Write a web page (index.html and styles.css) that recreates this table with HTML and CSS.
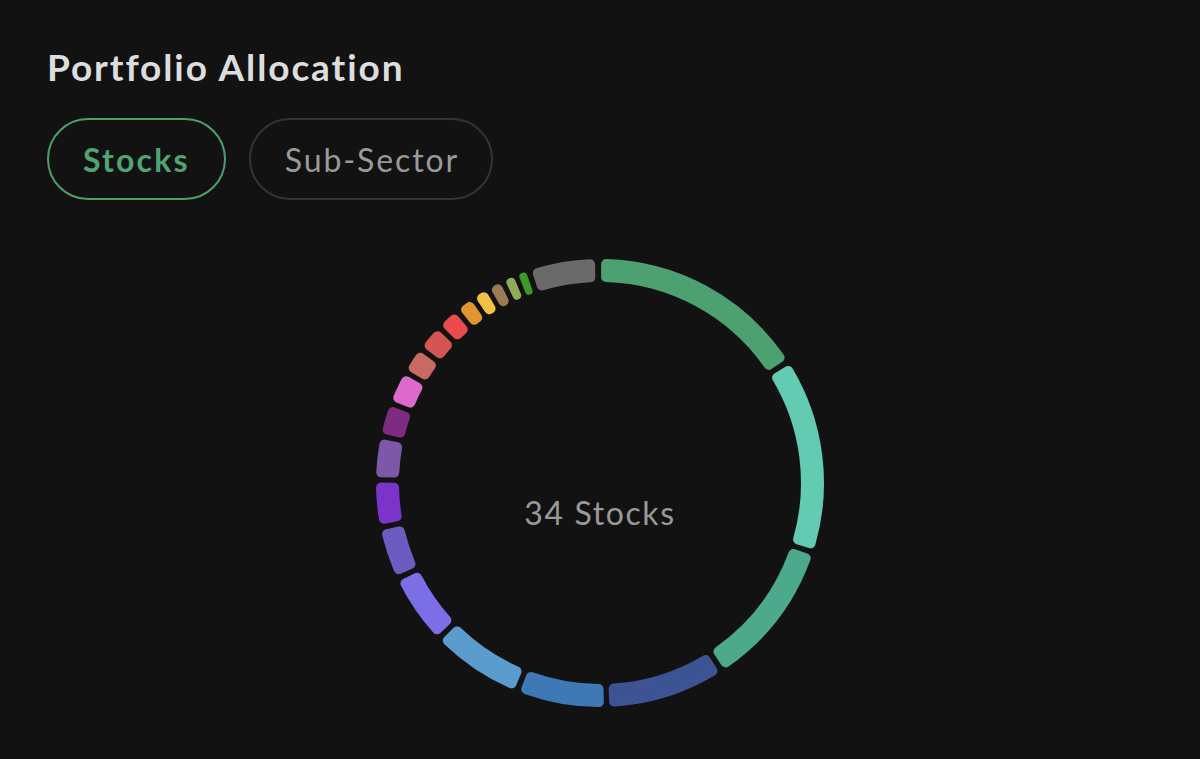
FILE: index.html
```html
<!DOCTYPE html>
<html lang="en">
<head>
<meta charset="utf-8">
<title>Portfolio Allocation</title>
<link rel="stylesheet" href="styles.css">
</head>
<body>
<main class="page">
  <h1 class="title">Portfolio Allocation</h1>
  <div class="tabs">
    <button class="tab tab-active">Stocks</button>
    <button class="tab">Sub-Sector</button>
  </div>
  <section class="chart">
    <svg class="donut" id="donut" width="460" height="460" viewBox="-230 -230 460 460" aria-label="Allocation donut chart"></svg>
    <div class="center-label">34 Stocks</div>
  </section>
</main>
<script src="script.js"></script>
</body>
</html>
```

FILE: styles.css
```css
* { box-sizing: border-box; }
html, body {
  margin: 0;
  padding: 0;
  background: #121212;
  height: 100%;
  overflow: hidden;
}
body {
  font-family: Lato, "Noto Sans", "Liberation Sans", sans-serif;
  color: #dcdcdc;
}
.page {
  padding: 49px 0 0 47px;
  display: flex;
  flex-direction: column;
}
.title {
  margin: 0;
  font-size: 37px;
  line-height: 36px;
  font-weight: 700;
  color: #dddddd;
  letter-spacing: 1.9px;
}
.tabs {
  display: flex;
  gap: 23px;
  margin-top: 33px;
}
.tab {
  height: 82px;
  padding: 0 32px 0 34px;
  border-radius: 41px;
  border: 2px solid #343434;
  background: transparent;
  color: #9a9a9a;
  font-family: Lato, "Noto Sans", "Liberation Sans", sans-serif;
  font-size: 32px;
  font-weight: 400;
  letter-spacing: 1.9px;
  cursor: pointer;
}
.tab-active {
  padding: 0 34px 0 34px;
  border-color: #4b9f6f;
  color: #4fa472;
  font-weight: 700;
  letter-spacing: 2.2px;
}
.chart {
  display: grid;
  justify-items: center;
  align-items: center;
  margin-top: 53px;
  margin-left: -47px;
}
.donut, .center-label {
  grid-area: 1 / 1;
}
.center-label {
  margin-top: 58px;
  font-size: 32px;
  color: #999999;
  letter-spacing: 1.6px;
}
```

FILE: script.js
```js
(function () {
  var segs = [
    [0.3, 56.4, "#4da070"],
    [57.9, 107.3, "#62cbb2"],
    [108.8, 146.3, "#4ca98c"],
    [147.8, 177.6, "#3c5494"],
    [179.0, 201.0, "#3e78b5"],
    [202.5, 225.3, "#5b9ccf"],
    [226.8, 244.0, "#7b6ee6"],
    [245.5, 257.8, "#6a5cc0"],
    [259.3, 270.1, "#7b33c9"],
    [271.5, 281.4, "#7d57a8"],
    [282.8, 290.2, "#7e2b82"],
    [291.6, 299.0, "#dc6acb"],
    [300.4, 306.2, "#c86a62"],
    [307.6, 313.4, "#d35654"],
    [314.8, 319.6, "#ea4b4d"],
    [321.0, 324.8, "#e09530"],
    [326.1, 329.3, "#f1c244"],
    [330.6, 333.5, "#9c7a55"],
    [334.9, 337.3, "#8fad56"],
    [338.6, 340.7, "#3a9b2b"],
    [342.2, 358.7, "#6a6a6a"]
  ];
  var RO = 224, RI = 201;
  var svg = document.getElementById("donut");
  var NS = "http://www.w3.org/2000/svg";
  function pt(r, aDeg) {
    var a = aDeg * Math.PI / 180;
    return [(r * Math.sin(a)).toFixed(2), (-r * Math.cos(a)).toFixed(2)];
  }
  segs.forEach(function (s) {
    var a0 = s[0], a1 = s[1];
    var arcLen = (a1 - a0) * Math.PI / 180 * ((RO + RI) / 2);
    var cr = Math.min(5, arcLen / 2 - 0.3);
    var ro = RO - cr, ri = RI + cr;
    var dO = Math.asin(cr / ro) * 180 / Math.PI;
    var dI = Math.asin(cr / ri) * 180 / Math.PI;
    var o0 = a0 + dO, o1 = a1 - dO;
    var i0 = a0 + dI, i1 = a1 - dI;
    if (o1 < o0) { var m = (a0 + a1) / 2; o0 = o1 = m; }
    if (i1 < i0) { var m2 = (a0 + a1) / 2; i0 = i1 = m2; }
    var large = (o1 - o0) > 180 ? 1 : 0;
    var p1 = pt(ro, o0), p2 = pt(ro, o1), p3 = pt(ri, i1), p4 = pt(ri, i0);
    var d = "M" + p1.join(",") +
      " A" + ro + "," + ro + " 0 " + large + " 1 " + p2.join(",") +
      " L" + p3.join(",") +
      " A" + ri + "," + ri + " 0 " + large + " 0 " + p4.join(",") + " Z";
    var path = document.createElementNS(NS, "path");
    path.setAttribute("d", d);
    path.setAttribute("fill", s[2]);
    path.setAttribute("stroke", s[2]);
    path.setAttribute("stroke-width", (cr * 2).toFixed(2));
    path.setAttribute("stroke-linejoin", "round");
    svg.appendChild(path);
  });
})();
```
